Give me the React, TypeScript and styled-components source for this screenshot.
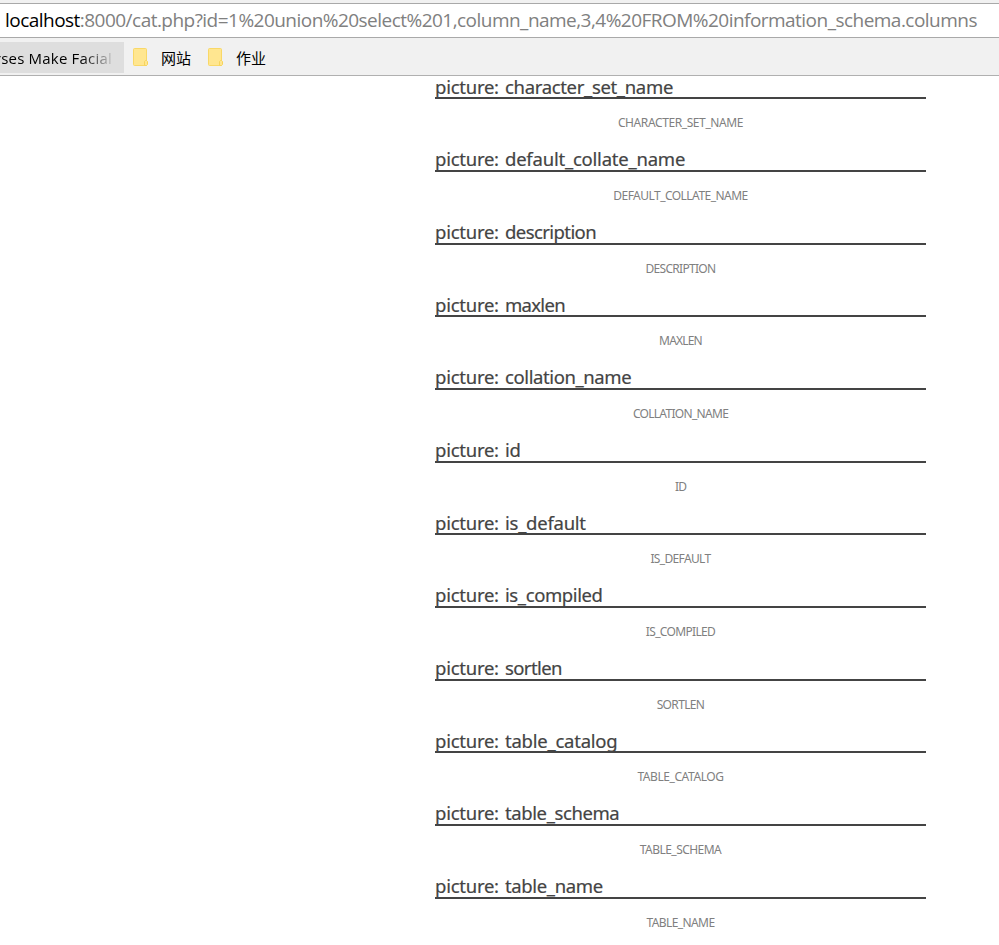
import React from "react";
import styled, { createGlobalStyle } from "styled-components";

const GlobalStyle = createGlobalStyle`
  * { box-sizing: border-box; }
  html, body { margin: 0; background: #fff; }
  body { overflow: hidden; }
`;

const Window = styled.div`
  width: 999px;
  height: 945px;
  overflow: hidden;
  display: flex;
  flex-direction: column;
  background: #fff;
`;

const AddressStrip = styled.header`
  flex: none;
  height: 38px;
  padding-top: 3px;
  background: #f1f1f1;
`;

const AddressField = styled.div`
  height: 35px;
  border-top: 1px solid #a9a9a9;
  border-bottom: 1px solid #a9a9a9;
  background: #fff;
  padding-left: 5px;
  font: 19px/33px "Open Sans", "Noto Sans", sans-serif;
  letter-spacing: -0.53px;
  white-space: nowrap;
  color: #808080;
`;

const Host = styled.span`
  letter-spacing: -0.53px;
  color: #000;
`;

const BookmarkBar = styled.nav`
  flex: none;
  height: 38px;
  display: flex;
  align-items: flex-start;
  padding-top: 4px;
  background: #f1f1f1;
  border-bottom: 1px solid #b0b0b0;
  font: 15px/31px "Open Sans", "Noto Sans CJK SC", sans-serif;
  color: #000;
`;

const HoveredBookmark = styled.div`
  width: 124px;
  height: 31px;
  padding-right: 12px;
  display: flex;
  justify-content: flex-end;
  overflow: hidden;
  background: #dedede;
  white-space: nowrap;
`;

const FadedLabel = styled.span`
  line-height: 33px;
  letter-spacing: 0.2px;
  color: transparent;
  background: linear-gradient(to right, #000 calc(100% - 30px), #c4c4c4);
  background-clip: text;
  -webkit-background-clip: text;
`;

const Folder = styled.div`
  display: flex;
  width: 75px;
  padding-left: 8px;
  gap: 12px;
  line-height: 33px;
  white-space: nowrap;

  svg { flex: none; margin-top: 5px; }
`;

const Listing = styled.main`
  width: 491px;
  margin-left: 435px;
  padding-top: 0.67px;
`;

const Entry = styled.section`
  height: 72.6667px;
`;

const Title = styled.h2<{ $tracking: number }>`
  margin: 0;
  height: 22.6667px;
  border-bottom: 2px solid #444;
  font: 400 18.5px/19px "Noto Sans", "Open Sans", sans-serif;
  -webkit-text-stroke: 0.2px #444;
  letter-spacing: -0.25px;
  white-space: nowrap;
  color: #444;

  span { letter-spacing: ${(p) => p.$tracking}px; }
`;

const Prefix = styled.b`
  display: inline-block;
  width: 70px;
  font-weight: 400;
`;

const Caption = styled.p<{ $tracking: number }>`
  margin: 14.1px 0 0;
  text-align: center;
  font: 12px/20px "Noto Sans", "Open Sans", sans-serif;
  letter-spacing: ${(p) => p.$tracking}px;
  color: #808080;
`;

const FolderIcon = () => (
  <svg width="17" height="20" viewBox="0 0 17 20">
    <path d="M1.500 2.500Q1.500 1.500 2.500 1.500H13.500Q14.500 1.500 14.500 2.500V18.500H2.500Q1.500 18.500 1.500 17.500Z" fill="#ffe690" stroke="#f9d867" />
    <path d="M12.500 18.500V14.500L13.500 13.500H14.500L15.500 14.500V17.500L14.500 18.500Z" fill="#ffe690" stroke="#f7d45d" />
  </svg>
);

type Column = { name: string; title: number; caption: number };

const columns: Column[] = [
  { name: "character_set_name", title: -0.33, caption: -0.4 },
  { name: "default_collate_name", title: -0.22, caption: -0.53 },
  { name: "description", title: -0.58, caption: -0.7 },
  { name: "maxlen", title: -0.7, caption: -0.8 },
  { name: "collation_name", title: -0.4, caption: -0.7 },
  { name: "id", title: -0.3, caption: -0.8 },
  { name: "is_default", title: -0.25, caption: -0.65 },
  { name: "is_compiled", title: -0.4, caption: -0.67 },
  { name: "sortlen", title: -0.6, caption: -0.65 },
  { name: "table_catalog", title: -0.24, caption: -0.42 },
  { name: "table_schema", title: -0.4, caption: -0.53 },
  { name: "table_name", title: -0.36, caption: -0.6 },
];

export default function App() {
  return (
    <Window>
      <GlobalStyle />
      <AddressStrip>
        <AddressField>
          <Host>localhost</Host>
          :8000/cat.php?id=1%20union%20select%201,column_name,3,4%20FROM%20information_schema.columns
        </AddressField>
      </AddressStrip>
      <BookmarkBar>
        <HoveredBookmark>
          <FadedLabel>rses Make Facial</FadedLabel>
        </HoveredBookmark>
        <Folder><FolderIcon />网站</Folder>
        <Folder><FolderIcon />作业</Folder>
      </BookmarkBar>
      <Listing>
        {columns.map((c) => (
          <Entry key={c.name}>
            <Title $tracking={c.title}><Prefix>picture:</Prefix><span>{c.name}</span></Title>
            <Caption $tracking={c.caption}>{c.name.toUpperCase()}</Caption>
          </Entry>
        ))}
      </Listing>
    </Window>
  );
}
